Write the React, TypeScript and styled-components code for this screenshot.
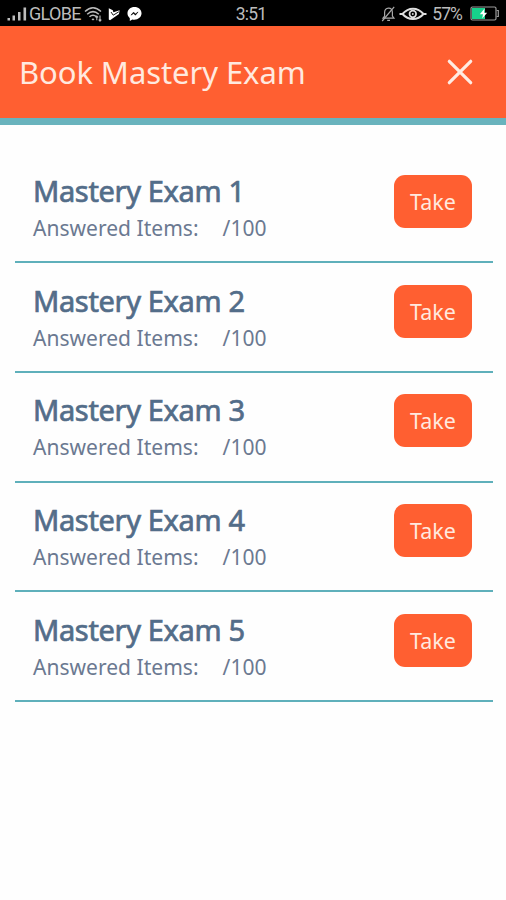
import React from "react";
import styled, { createGlobalStyle } from "styled-components";

const GlobalStyle = createGlobalStyle`
  * { box-sizing: border-box; }
  body { margin: 0; background: #fff; font-family: "Noto Sans", sans-serif; }
`;

const Screen = styled.div`
  width: 506px;
  height: 900px;
  overflow: hidden;
  background: #fefefe;
`;

const StatusBar = styled.div`
  height: 26px;
  display: grid;
  grid-template-columns: 1fr auto 1fr;
  align-items: center;
  padding: 1px 7px 0;
  background: #000;
  color: #bcbcbc;
  font-family: Roboto, sans-serif;
`;

const StatusGroup = styled.div<{ $end?: boolean }>`
  display: flex;
  align-items: center;
  justify-content: ${(p) => (p.$end ? "flex-end" : "flex-start")};
  svg { display: block; flex: none; }
`;

const StatusText = styled.span<{ $size?: number; $tracking?: number }>`
  font-size: ${(p) => p.$size ?? 18}px;
  letter-spacing: ${(p) => p.$tracking ?? 0}px;
  line-height: 22px;
  white-space: nowrap;
`;

const Clock = styled(StatusText)`
  padding-right: 4px;
`;

const Spacer = styled.span<{ $w: number }>`
  flex: none;
  width: ${(p) => p.$w}px;
`;

const Header = styled.header`
  height: 99px;
  display: flex;
  justify-content: space-between;
  align-items: center;
  padding: 0 33px 0 19px;
  background: #ff5f31;
  border-bottom: 7px solid #69b3bd;
`;

const Heading = styled.h1`
  margin: 0;
  font-size: 31px;
  line-height: 42px;
  font-weight: 400;
  letter-spacing: -0.08px;
  color: #ffe9df;
  white-space: nowrap;
`;

const CloseButton = styled.button`
  width: 26px;
  height: 26px;
  padding: 0;
  border: 0;
  background: none;
  svg { display: block; }
`;

const ExamList = styled.ul`
  list-style: none;
  margin: 0;
  padding: 28.6px 13px 0 15px;
`;

const ExamRow = styled.li`
  height: 109.7px;
  display: flex;
  justify-content: space-between;
  align-items: flex-start;
  padding: 21.5px 21px 0 18px;
  border-bottom: 2px solid #5fb0bb;
`;

const ExamInfo = styled.div`
  display: flex;
  flex-direction: column;
`;

const ExamTitle = styled.h2`
  margin: -4px 0 0;
  font-size: 29px;
  line-height: 40px;
  font-weight: 400;
  letter-spacing: -0.35px;
  -webkit-text-stroke: 0.7px #536d89;
  color: #536d89;
  white-space: nowrap;
`;

const ExamProgress = styled.div`
  display: flex;
  gap: 24px;
  margin-top: 2px;
  font-size: 21px;
  letter-spacing: 0.03px;
  line-height: 30px;
  color: #6b7991;
  white-space: nowrap;
`;

const TakeButton = styled.button`
  width: 78px;
  height: 53px;
  padding: 0;
  border: 0;
  border-radius: 11px;
  background: #ff5f31;
  color: #ffe9df;
  font: 400 21.5px/31px "Noto Sans", sans-serif;
`;

const SignalIcon = () => (
  <svg width="21" height="16" viewBox="0 0 21 16" fill="#bcbcbc">
    <rect x="0.5" y="12" width="2.5" height="2.5" />
    <rect x="5.5" y="9.5" width="2.5" height="5" />
    <rect x="11" y="6" width="2.5" height="8.5" />
    <rect x="16.5" y="1.5" width="2.6" height="13" />
  </svg>
);

const WifiIcon = () => (
  <svg width="20" height="18" viewBox="0 0 20 18" fill="none" stroke="#bcbcbc" strokeWidth="1.5">
    <path d="M1 6.5Q9-1 17 6.5" />
    <path d="M3.2 9.2Q9 4 14.8 9.2" />
    <path d="M5.5 11.8Q9 8.6 12.5 11.8" />
    <path d="M7.5 14.2Q9 12.6 10.5 14.2L9 15.6Z" fill="#bcbcbc" stroke="none" />
    <path d="M12.8 15.2v-4M11.5 12.4l1.3-1.4 1.3 1.4M16 10.5v5.5M14.7 14.6l1.3 1.5 1.3-1.5" strokeWidth="1.1" />
  </svg>
);

const PlayMarkIcon = () => (
  <svg width="12" height="14" viewBox="0 0 12 14">
    <path d="M0.8 1.2L4.8 3.3L5.4 5.2L11.6 3.2L11 7L2 13.2L0.8 12.6Z" fill="#fff" />
    <path d="M3 5L5.2 8.2L10.8 4.8" fill="none" stroke="#000" strokeWidth="0.9" />
  </svg>
);

const MessengerIcon = () => (
  <svg width="15" height="16" viewBox="0 0 16 16">
    <path d="M8 0.5C3.7 0.5 0.5 3.4 0.5 7.3C0.5 9.5 1.5 11.2 3 12.4V15.5L5.7 13.9C11 15 15.5 11.8 15.5 7.3C15.5 3.4 12.3 0.5 8 0.5Z" fill="#fff" />
    <path d="M4.2 9.2L7 6L9 8L11.8 5.8L9 9.2L7 7.4Z" fill="#000" stroke="#000" strokeWidth="0.6" />
  </svg>
);

const BellOffIcon = () => (
  <svg width="15" height="16" viewBox="0 0 15 16" fill="none" stroke="#a8a8a8" strokeWidth="1.2">
    <path d="M2 12.2L3.6 10V6.5C3.6 3.8 5.2 2.3 7.5 2.1S11.4 3.8 11.4 6.5V10L13 12.2Z" />
    <path d="M6.2 14.3h2.8M13.2 0.8L1.2 15" />
  </svg>
);

const EyeIcon = () => (
  <svg width="28" height="14" viewBox="0 0 28 14" fill="none" stroke="#dedede" strokeWidth="2">
    <path d="M0.5 7H3.5C9.5 0 18.5 0 24.5 7H27.5M3.5 7C9.5 13.8 18.5 13.8 24.5 7" />
    <circle cx="13.8" cy="7" r="3.3" strokeWidth="1.7" />
    <circle cx="13.8" cy="7" r="0.9" fill="#dedede" stroke="none" />
  </svg>
);

const BatteryIcon = () => (
  <svg width="29" height="15" viewBox="0 0 29 15">
    <rect x="1" y="1" width="25" height="13" rx="1.5" fill="none" stroke="#9c9c9c" strokeWidth="1.2" />
    <rect x="2" y="2" width="13" height="11" fill="#16d18b" />
    <path d="M26.6 4.5h1.7v6h-1.7" fill="none" stroke="#9c9c9c" strokeWidth="1.2" />
    <path d="M14.6 2.6L9.8 8.2H13L12.2 12.4L17.2 6.8H14Z" fill="#fff" />
  </svg>
);

const CloseIcon = () => (
  <svg width="26" height="26" viewBox="0 0 26 26" fill="none" stroke="#ffebe2" strokeWidth="3.2" strokeLinecap="round">
    <path d="M2.3 2.3L23.7 23.7M23.7 2.3L2.3 23.7" />
  </svg>
);

const exams = [1, 2, 3, 4, 5];

export default function App() {
  return (
    <>
      <GlobalStyle />
      <Screen>
        <StatusBar>
          <StatusGroup>
            <SignalIcon />
            <Spacer $w={1} />
            <StatusText $tracking={-0.7}>GLOBE</StatusText>
            <Spacer $w={3} />
            <WifiIcon />
            <Spacer $w={4} />
            <PlayMarkIcon />
            <Spacer $w={7} />
            <MessengerIcon />
          </StatusGroup>
          <Clock $size={17.5} $tracking={-0.8}>3:51</Clock>
          <StatusGroup $end>
            <BellOffIcon />
            <Spacer $w={3} />
            <EyeIcon />
            <Spacer $w={5} />
            <StatusText $size={17.5} $tracking={-0.9}>57%</StatusText>
            <Spacer $w={8} />
            <BatteryIcon />
          </StatusGroup>
        </StatusBar>
        <Header>
          <Heading>Book Mastery Exam</Heading>
          <CloseButton aria-label="Close">
            <CloseIcon />
          </CloseButton>
        </Header>
        <ExamList>
          {exams.map((n) => (
            <ExamRow key={n}>
              <ExamInfo>
                <ExamTitle>Mastery Exam {n}</ExamTitle>
                <ExamProgress>
                  <span>Answered Items:</span>
                  <span>/100</span>
                </ExamProgress>
              </ExamInfo>
              <TakeButton>Take</TakeButton>
            </ExamRow>
          ))}
        </ExamList>
      </Screen>
    </>
  );
}
